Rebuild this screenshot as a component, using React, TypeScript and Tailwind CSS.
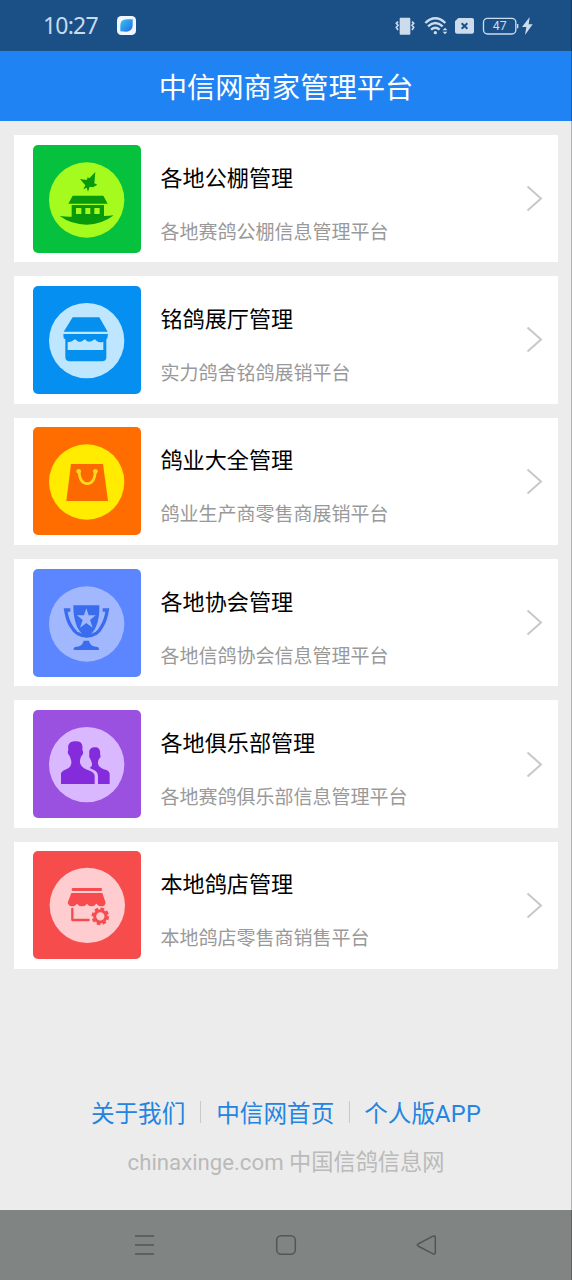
import type { ReactNode } from "react";

const LoftIcon = () => (
  <svg viewBox="39 28 324 324" className="h-full w-full">
    <circle cx="200" cy="193" r="113" fill="#a5fb1e" />
    <g fill="#069a0c">
      <path d="M226 109 L223 143 L232 147 L219 155 L209 153 L204 168 L200 156 L190 161 L196 149 L180 130 L200 133 L203 125 L208 128 Z" />
      <path d="M158 180 H250 L263 204 H145 Z" />
      <path d="M155 208 H252 V241 Q268 241 281 239 Q245 267 200 267 Q155 267 119 241 Q140 244 155 243 Z" />
    </g>
    <path d="M168 217 h16 v18 h-16 z M196 217 h15 v18 h-15 z M223 217 h16 v18 h-16 z" fill="#a5fb1e" />
  </svg>
);

const HallIcon = () => (
  <svg viewBox="39 30 324 324" className="h-full w-full">
    <circle cx="200" cy="194" r="113" fill="#bee7ff" />
    <path d="M158 124 H238 L263 167 H131 Z" fill="#058fee" />
    <path d="M130 174 H264 L262 187 L259 190 V244 Q259 256 246 256 H150 Q136 256 136 243 V190 L131 187 Z" fill="#058fee" />
    <path d="M143 198 Q155 199 161 192 L166 190 L172 195 Q181 201 190 193 L195 190 L201 196 Q211 200 219 193 L225 190 L230 195 Q238 201 250 197 V222 H143 Z" fill="#bee7ff" />
  </svg>
);

const BagIcon = () => (
  <svg viewBox="39 30 324 324" className="h-full w-full">
    <circle cx="200" cy="195" r="113" fill="#ffec00" />
    <path d="M153 141 H249 L264 252 H139 Z" fill="#fb6900" />
    <path d="M177 163 Q179 199 202 200 Q224 199 226 163" fill="none" stroke="#ffd91a" strokeWidth="8" />
    <circle cx="176" cy="163" r="7" fill="#ffd91a" />
    <circle cx="226" cy="163" r="7" fill="#ffd91a" />
  </svg>
);

const TrophyIcon = () => (
  <svg viewBox="39 31 324 324" className="h-full w-full">
    <circle cx="200" cy="196" r="113" fill="#a1b8fe" />
    <path
      d="M151 154 H137 Q142 186 153 202 Q169 232 200 232 Q231 232 245 204 Q257 185 262 154 H248"
      fill="none"
      stroke="#3a6ded"
      strokeWidth="10"
    />
    <path d="M160 140 H238 Q239 180 228 204 Q219 224 200 237 Q181 224 171 204 Q160 180 160 140 Z" fill="#3a6ded" />
    <path d="M155 154 Q156 190 174 219" fill="none" stroke="#a1b8fe" strokeWidth="4" />
    <path d="M243 154 Q242 190 225 219" fill="none" stroke="#a1b8fe" strokeWidth="4" />
    <path
      d="M199 149 L206 170 L227 170 L210 184 L218 207 L199 193 L180 207 L188 184 L171 170 L192 170 Z"
      fill="#a1b8fe"
    />
    <path d="M191 246 H207 Q209 264 233 265 Q238 266 237 274 H161 Q160 266 165 265 Q189 264 191 246 Z" fill="#3a6ded" />
  </svg>
);

const ClubIcon = () => (
  <svg viewBox="39 30 324 324" className="h-full w-full">
    <circle cx="200" cy="194" r="113" fill="#dab8ff" />
    <g fill="#842bdb">
      <path d="M166 124 C186 122 189 136 187 150 C192 155 188 167 184 168 C181 176 179 181 180 188 Q183 202 204 210 Q223 217 224 227 V252 H123 V219 Q127 211 140 207 Q153 202 154 190 C155 180 151 176 149 168 C143 163 142 155 145 150 C142 132 150 124 166 124 Z" />
      <path d="M225 142 C238 141 242 153 240 163 C244 168 240 174 237 176 Q233 184 234 192 Q237 204 259 210 Q269 214 269 223 V252 H234 V230 Q234 216 223 211 L209 204 Q217 200 216 192 Q215 184 211 177 Q206 171 208 163 C206 148 213 142 225 142 Z" />
    </g>
  </svg>
);

const ShopIcon = () => (
  <svg viewBox="39 30 324 324" className="h-full w-full">
    <circle cx="202" cy="193" r="113" fill="#ffcccf" />
    <g fill="#f74c4f">
      <rect x="155" y="141" width="91" height="9" rx="4" />
      <path d="M154 156 H247 L257 185 Q255 196 244 196 Q235 196 229 188 Q223 196 215 196 Q206 196 201 188 Q195 197 185 196 Q177 196 171 188 Q166 196 156 196 Q145 194 143 185 Z" />
    </g>
    <path d="M157 204 V237 H206" fill="none" stroke="#f74c4f" strokeWidth="7" strokeLinecap="round" strokeLinejoin="round" />
    <circle cx="241" cy="226" r="22" fill="none" stroke="#f74c4f" strokeWidth="9" strokeDasharray="10.28 7" />
    <circle cx="241" cy="226" r="17" fill="none" stroke="#f74c4f" strokeWidth="9" />
  </svg>
);

type Entry = {
  title: string;
  desc: string;
  tile: string;
  icon: ReactNode;
};

const entries: Entry[] = [
  { title: "各地公棚管理", desc: "各地赛鸽公棚信息管理平台", tile: "bg-[#05c13d]", icon: <LoftIcon /> },
  { title: "铭鸽展厅管理", desc: "实力鸽舍铭鸽展销平台", tile: "bg-[#058ff0]", icon: <HallIcon /> },
  { title: "鸽业大全管理", desc: "鸽业生产商零售商展销平台", tile: "bg-[#ff6c00]", icon: <BagIcon /> },
  { title: "各地协会管理", desc: "各地信鸽协会信息管理平台", tile: "bg-[#5b86ff]", icon: <TrophyIcon /> },
  { title: "各地俱乐部管理", desc: "各地赛鸽俱乐部信息管理平台", tile: "bg-[#9a51e0]", icon: <ClubIcon /> },
  { title: "本地鸽店管理", desc: "本地鸽店零售商销售平台", tile: "bg-[#f74c4c]", icon: <ShopIcon /> },
];

function StatusBar() {
  return (
    <div className="flex h-[51px] items-center justify-between bg-[#1b5087] pl-[43px] pr-[38px] text-[#c8daec]">
      <div className="flex items-center">
        <span className="w-[74px] font-['Noto_Sans','Noto_Sans_CJK_SC',sans-serif] text-[23px] leading-none tracking-[-0.8px]">
          10:27
        </span>
        <svg width="19" height="19" viewBox="0 0 57 57">
          <defs>
            <linearGradient id="leaf" x1="0" y1="0" x2="1" y2="1">
              <stop offset="0" stopColor="#35c4f1" />
              <stop offset="0.55" stopColor="#2a92ec" />
              <stop offset="1" stopColor="#2468e8" />
            </linearGradient>
          </defs>
          <rect width="57" height="57" rx="13" fill="#f0f6fc" />
          <path d="M10 46 V27 Q11 11 29 10 H47 V28 Q46 45 29 47 Z" fill="url(#leaf)" />
        </svg>
      </div>
      <svg width="139" height="20" viewBox="0 0 417 60" fill="#ccdcec">
        {/* vibrate */}
        <rect x="14" y="5" width="32" height="51" rx="3" />
        <path
          d="M9 17 L4 22 L9 28 L4 34 L9 42 M51 17 L56 22 L51 28 L56 34 L51 42"
          fill="none"
          stroke="#ccdcec"
          strokeWidth="5"
        />
        {/* wifi */}
        <g fill="none" stroke="#ccdcec" strokeWidth="7">
          <path d="M91 21 Q121 -7 151 21" />
          <path d="M99 31 Q121 11 143 31" />
          <path d="M108 41 Q121 29 134 41" />
        </g>
        <circle cx="121" cy="50" r="5" />
        <path d="M143 43 L150 35 L157 43 Z M143 47 L150 55 L157 47 Z" />
        {/* sim */}
        <path d="M190 6 H231 Q237 6 237 12 V47 Q237 53 231 53 H186 Q180 53 180 47 V16 Z" />
        <path d="M200 22 L217 38 M217 22 L200 38" stroke="#1b5087" strokeWidth="6" />
        {/* battery */}
        <rect x="265.500" y="7" width="97" height="47" rx="12" fill="none" stroke="#ccdcec" strokeWidth="4" />
        <path d="M368 24 v13" stroke="#ccdcec" strokeWidth="4" />
        <text x="314" y="43" textAnchor="middle" fontSize="37" fontFamily="Roboto, sans-serif">
          47
        </text>
        <path d="M404 3 L381 33 H394 L390 57 L413 25 H401 Z" />
      </svg>
    </div>
  );
}

function EntryCard({ title, desc, tile, icon }: Entry) {
  return (
    <a className="flex h-[127.300px] items-center bg-white pl-[19px] pr-[14.500px]">
      <div className={`h-[108px] w-[108px] shrink-0 overflow-hidden rounded-[5px] ${tile}`}>{icon}</div>
      <div className="ml-[19.500px] flex-1 pt-[11px]">
        <h2 className="text-[22.100px] leading-8 text-black">{title}</h2>
        <p className="mt-[25px] text-[19px] leading-7 text-[#999999]">{desc}</p>
      </div>
      <svg width="17" height="27" viewBox="0 0 17 27" fill="none" stroke="#c8c8c8" strokeWidth="2">
        <path d="M1.500 1.500 L15 13.500 L1.500 25.500" />
      </svg>
    </a>
  );
}

export default function App() {
  return (
    <div className="relative flex h-[1280px] w-[572px] flex-col bg-[#ececec] font-[Roboto,'Noto_Sans_CJK_SC',sans-serif]">
      <StatusBar />
      <header className="flex h-[70px] items-center justify-center bg-[#2083f3]">
        <h1 className="pt-[6px] text-[28.300px] leading-none text-white">中信网商家管理平台</h1>
      </header>

      <main className="flex flex-col gap-[14.060px] pl-[14px] pr-[14.500px] pt-[14px]">
        {entries.map((entry) => (
          <EntryCard key={entry.title} {...entry} />
        ))}
      </main>

      <footer className="mt-auto flex flex-col items-center pb-[32px]">
        <nav className="flex items-center text-[23.600px] leading-9 text-[#2384e2]">
          <a>关于我们</a>
          <span className="mx-[15px] mb-1 h-[22px] w-px bg-[#c9c9c9]" />
          <a>中信网首页</a>
          <span className="ml-[15px] mr-[14px] mb-1 h-[22px] w-px bg-[#c9c9c9]" />
          <a>
            个人版<span className="tracking-[0.3px]">APP</span>
          </a>
        </nav>
        <p className="mt-[14px] text-[22.200px] leading-8 text-[#bababa]">chinaxinge.com 中国信鸽信息网</p>
      </footer>

      {/* System navigation */}
      <div className="flex h-[70px] items-center bg-[#808482] pl-[134px]">
        <svg width="303" height="22" viewBox="0 0 303 22" fill="none" stroke="#525654" strokeWidth="1.500">
          <path d="M1 2 H20 M1 11 H20 M1 20 H20" />
          <rect x="142.700" y="1.700" width="18.600" height="18.600" rx="4.500" />
          <path d="M284 10 L299 2.200 Q301.300 1.200 301.300 3.500 V18.500 Q301.300 20.800 299 19.800 L284 12 Q282.500 11 284 10 Z" />
        </svg>
      </div>

      <div className="absolute inset-y-0 right-0 w-px bg-black/25" />
    </div>
  );
}
